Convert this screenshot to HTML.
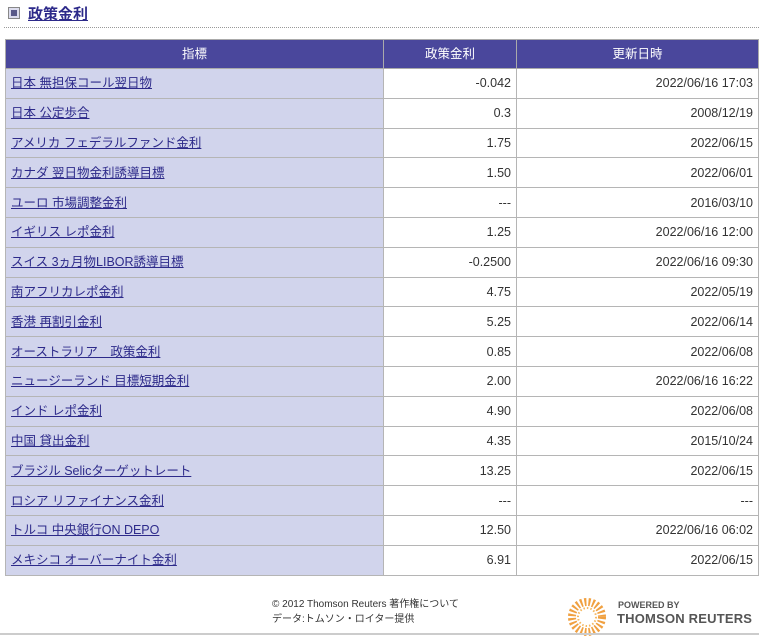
<!DOCTYPE html>
<html><head><meta charset="utf-8"><style>
body{margin:0;background:#fff;font-family:"Liberation Sans","Noto Sans CJK JP",sans-serif;width:759px;height:636px;overflow:hidden;position:relative}
.t{position:absolute;left:8px;top:6px;font-size:15px;line-height:18px;font-weight:bold;color:#2d2a8a}
.t i{display:inline-block;width:10px;height:10px;border:1px solid #888;background:#5a5a8a;box-shadow:inset 0 0 0 2px #dde;vertical-align:0px;margin-right:8px}
.t a{color:#2d2a8a;text-decoration:underline}
.dl{position:absolute;left:4px;right:0;top:27px;border-top:1px dotted #999}
table{position:absolute;left:5px;top:39px;width:753px;border-collapse:collapse;table-layout:fixed;font-size:12.5px;line-height:14px}
th{background:#4a479c;color:#fff;font-weight:normal;height:28px;border:1px solid #aaa;padding:0;vertical-align:middle}
td{height:28.8px;border:1px solid #b5b5b5;padding:0 5px;color:#333;vertical-align:middle;white-space:nowrap}
td.n{background:#d1d4ec}
td.n a{color:#2d2a8a;text-decoration:underline}
td.r{text-align:right}
.f{position:absolute;left:272px;top:597px;font-size:10px;color:#333;line-height:15px}
.lg{position:absolute;left:566px;top:598px;width:42px;height:38px}
.pb{position:absolute;left:618px;top:600px;font-size:9px;font-weight:bold;color:#555;white-space:nowrap}
.tr{position:absolute;left:617px;top:611px;font-size:13px;font-weight:bold;color:#555;white-space:nowrap;line-height:16px;letter-spacing:0.2px}
.bl{position:absolute;left:0;right:0;top:633px;border-top:2px solid #ccc}
</style></head><body>
<div class="t"><i></i><a>政策金利</a></div>
<div class="dl"></div>
<table>
<colgroup><col style="width:378px"><col style="width:133px"><col style="width:242px"></colgroup>
<tr><th>指標</th><th>政策金利</th><th>更新日時</th></tr>
<tr><td class="n"><a>日本 無担保コール翌日物</a></td><td class="r">-0.042</td><td class="r">2022/06/16 17:03</td></tr>
<tr><td class="n"><a>日本 公定歩合</a></td><td class="r">0.3</td><td class="r">2008/12/19</td></tr>
<tr><td class="n"><a>アメリカ フェデラルファンド金利</a></td><td class="r">1.75</td><td class="r">2022/06/15</td></tr>
<tr><td class="n"><a>カナダ 翌日物金利誘導目標</a></td><td class="r">1.50</td><td class="r">2022/06/01</td></tr>
<tr><td class="n"><a>ユーロ 市場調整金利</a></td><td class="r">---</td><td class="r">2016/03/10</td></tr>
<tr><td class="n"><a>イギリス レポ金利</a></td><td class="r">1.25</td><td class="r">2022/06/16 12:00</td></tr>
<tr><td class="n"><a>スイス 3ヵ月物LIBOR誘導目標</a></td><td class="r">-0.2500</td><td class="r">2022/06/16 09:30</td></tr>
<tr><td class="n"><a>南アフリカレポ金利</a></td><td class="r">4.75</td><td class="r">2022/05/19</td></tr>
<tr><td class="n"><a>香港 再割引金利</a></td><td class="r">5.25</td><td class="r">2022/06/14</td></tr>
<tr><td class="n"><a>オーストラリア　政策金利</a></td><td class="r">0.85</td><td class="r">2022/06/08</td></tr>
<tr><td class="n"><a>ニュージーランド 目標短期金利</a></td><td class="r">2.00</td><td class="r">2022/06/16 16:22</td></tr>
<tr><td class="n"><a>インド レポ金利</a></td><td class="r">4.90</td><td class="r">2022/06/08</td></tr>
<tr><td class="n"><a>中国 貸出金利</a></td><td class="r">4.35</td><td class="r">2015/10/24</td></tr>
<tr><td class="n"><a>ブラジル Selicターゲットレート</a></td><td class="r">13.25</td><td class="r">2022/06/15</td></tr>
<tr><td class="n"><a>ロシア リファイナンス金利</a></td><td class="r">---</td><td class="r">---</td></tr>
<tr><td class="n"><a>トルコ 中央銀行ON DEPO</a></td><td class="r">12.50</td><td class="r">2022/06/16 06:02</td></tr>
<tr><td class="n"><a>メキシコ オーバーナイト金利</a></td><td class="r">6.91</td><td class="r">2022/06/15</td></tr>
</table>
<div class="f">© 2012 Thomson Reuters 著作権について<br>データ:トムソン・ロイター提供</div>
<svg class="lg" viewBox="0 0 42 38"><circle cx="21" cy="19" r="15" fill="none" stroke="#f0a040" stroke-width="8" stroke-dasharray="2 2"/><circle cx="21" cy="19" r="9" fill="none" stroke="#f5b860" stroke-width="2" stroke-dasharray="1.5 2"/></svg>
<div class="pb">POWERED BY</div>
<div class="tr">THOMSON REUTERS</div>
<div class="bl"></div>
</body></html>
